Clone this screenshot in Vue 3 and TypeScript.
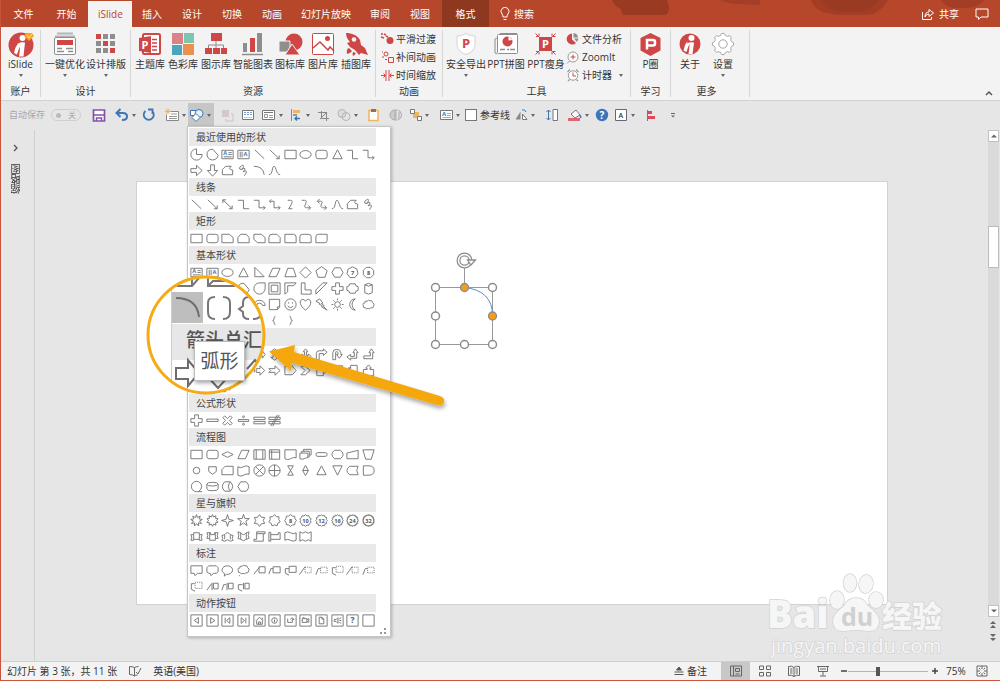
<script setup lang="ts">
import { ref } from 'vue'

interface Tool { label: string; art: string; drop?: boolean; wide?: boolean }
interface QuickItem { label: string; art: string; gap: string; drop?: boolean }
interface Section { title: string; shapes: string[]; covered?: boolean }

const RED = '#cf4647'
const GREY = '#8e8e8e'

const tabs = [
  { label: '文件', kind: 'roomy' }, { label: '开始', kind: 'roomy' }, { label: 'iSlide', kind: 'current' },
  { label: '插入', kind: '' }, { label: '设计', kind: '' }, { label: '切换', kind: '' }, { label: '动画', kind: '' },
  { label: '幻灯片放映', kind: 'long' }, { label: '审阅', kind: '' }, { label: '视图', kind: '' }, { label: '格式', kind: 'context' },
]

const infoBadge = `<circle cx="14" cy="15" r="12.5" fill="${RED}"/><circle cx="15.5" cy="8" r="3" fill="#fff"/><path d="M11 13.5q3-2 7-1l-1.5 14h-4.500q1-6 1-10-1.200 2-3 8l-3-1.500q1-6 4-9.500z" fill="#fff"/>`

const account: Tool[] = [
  { label: 'iSlide', drop: true, art: `${infoBadge}<path d="M19 3h6l2 3-5 5-5-5z" fill="#f6a51c"/><path d="M20 5l2 3 3-4" stroke="#ffe38a" fill="none"/>` },
]
const design: Tool[] = [
  { label: '一键优化', drop: true, wide: true, art: `<path d="M6 3.500h16M4 6.500h20" stroke="#b5b5b5" stroke-width="2"/><rect x="3.500" y="7.500" width="21" height="17" rx="1.500" fill="#fff" stroke="${GREY}"/><rect x="6" y="10" width="16" height="5" fill="${RED}"/><path d="M6 18.500h5M6 21.500h7M15 18.500h7M17 21.500h5" stroke="${GREY}" stroke-width="1.500"/>` },
  { label: '设计排版', drop: true, wide: true, art: [0, 1, 2].map(r => [0, 1, 2].map(c => `<rect x="${4 + c * 7}" y="${4 + r * 7}" width="5" height="5" fill="${r === c ? RED : GREY}"/>`).join('')).join('') },
]
const resources: Tool[] = [
  { label: '主题库', art: `<rect x="7" y="4" width="17" height="20" rx="1.500" fill="#fff" stroke="${RED}" stroke-width="2"/><path d="M16 9.500h5M16 13h5M16 16.500h5M16 20h5" stroke="${RED}" stroke-width="1.500"/><path d="M3 8l12-2v17L3 21z" fill="${RED}"/><text x="5.500" y="18.500" font-size="11" font-weight="700" fill="#fff">P</text>` },
  { label: '色彩库', art: `<path d="M3 3h11v11H3z" fill="#dc8089"/><path d="M15 3h10v10H15z" fill="#7cc6b1"/><path d="M3 15h10v10H3z" fill="#4ba6bd"/><path d="M14 14h11v11H14z" fill="#ea9050"/>` },
  { label: '图示库', art: `<path d="M14 11v4M6.500 20v-5h15v5M14 15v5" fill="none" stroke="${GREY}"/><path d="M9 3h11v8H9zM3 18h7v6H3zM11 18h7v6h-7zM19 18h6v6h-6z" fill="${RED}"/>` },
  { label: '智能图表', wide: true, art: `<path d="M4 13h4v9H4zM18 3h5v19h-5z" fill="${GREY}"/><path d="M11 8h5v14h-5z" fill="${RED}"/><path d="M3 24.500h21" stroke="${GREY}" stroke-width="1.500"/>` },
  { label: '图标库', art: `<circle cx="18" cy="12" r="8.500" fill="${RED}"/><path d="M3 11h11v11H3z" fill="${GREY}" stroke="#f3f3f3"/><path d="M16 14l8 11H9z" fill="${RED}" stroke="#f3f3f3"/>` },
  { label: '图片库', art: `<rect x="3.500" y="3.500" width="21" height="21" rx="1" fill="#fff" stroke="${RED}"/><path d="M4 18l7-6 8 8 2-3 4 4" fill="none" stroke="${RED}" stroke-width="1.500"/><circle cx="18.500" cy="8.500" r="2.500" fill="${RED}"/>` },
  { label: '插图库', art: `<path d="M4 3c6 0 11 2 14 7l1 5 4 3 3 7-7-2-2 2-4-5-5-3-3-4 3-1C5 9 4 6 4 3z" fill="${RED}"/><circle cx="12" cy="9.500" r="2.300" fill="#f3f3f3"/><path d="M7 18q-3 1-2 6 4-1 5-3M11 22q-1 2 0 4 2-1 3-3" fill="${RED}"/>` },
]
const motion: Tool[] = [
  { label: '平滑过渡', art: `<circle cx="10" cy="8.500" r="3.500" fill="${RED}"/><path d="M1 2h2M4 2l2 1M1 5l3 1M6 4l2 1" stroke="${RED}" stroke-width="1.500"/>` },
  { label: '补间动画', art: `<path d="M8.500 7.500h5v5h-5z" fill="none" stroke="${RED}"/><circle cx="6" cy="4" r="2" fill="none" stroke="${RED}"/><path d="M2 2h1M2 7h2M5 9.500h2" stroke="${RED}"/>` },
  { label: '时间缩放', art: `<path d="M6 2v11M9 2v11" stroke="${RED}"/><path d="M1 7.500h4M3.500 5.500l2 2-2 2M14 7.500h-4M11.500 5.500l-2 2 2 2" fill="none" stroke="${RED}"/>` },
]
const toolsBig: Tool[] = [
  { label: '安全导出', drop: true, wide: true, art: `<path d="M14 3.500q4 2.500 9 2.500v9q-1 7-9 9.500Q6 22 5 15V6q5 0 9-2.500z" fill="#fff" stroke="#d5d5d5"/><text x="10" y="18" font-size="13" font-weight="700" fill="${RED}">P</text>` },
  { label: 'PPT拼图', wide: true, art: `<path d="M5 8l-2 1v14l2 1M8 5V3.500h17V6" fill="none" stroke="${GREY}"/><rect x="5.500" y="4.500" width="20" height="19" rx="1" fill="#fff" stroke="${GREY}"/><circle cx="15.500" cy="11.500" r="5" fill="${RED}"/><path d="M16.500 10.500V6l4 4z" fill="#fff"/><path d="M8 19.500h5M15 19.500h2M18 19.500h5" stroke="${GREY}" stroke-width="1.500"/>` },
  { label: 'PPT瘦身', wide: true, art: `<path d="M7 7h13v14H7z" fill="${RED}"/><text x="10" y="18" font-size="11" font-weight="700" fill="#fff">P</text><path d="M3.500 3.500l4 4M4 6.500h3V3.500M23.500 3.500l-4 4M20 3.500v3h3.500M3.500 24.500l4-4M4 21.500h3v3M23.500 24.500l-4-4M23.500 21.500H20v3" fill="none" stroke="${RED}"/>` },
]
const toolsSmall: Tool[] = [
  { label: '文件分析', art: `<path d="M6 1.500v6l4 3.500A5.500 5.500 0 1 1 6 1.500z" fill="${RED}"/><path d="M7.500 1A5 5 0 0 1 12 5.500H7.500zM8 6.500h4.500L11 10z" fill="${GREY}"/>` },
  { label: 'ZoomIt', art: `<circle cx="7" cy="7" r="5" fill="#fff" stroke="#999"/><path d="M3.500 11L1 13.500" stroke="#999"/><path d="M4.500 7h5M7 4.500v5" stroke="${RED}"/>` },
  { label: '计时器', drop: true, art: `<circle cx="7" cy="7.500" r="4.700" fill="#fff" stroke="#999"/><path d="M1.500 4l2.500-2.500M12.500 4L10 1.500M3.500 11.500L2 13M10.500 11.500L12 13" stroke="#999" stroke-width="1.300"/><path d="M7 4.500V8h3" fill="none" stroke="${RED}"/>` },
]
const learn: Tool[] = [
  { label: 'P圈', art: `<path d="M13.500 3l10 5v12.500l-10 5.500-10-5.500V8z" fill="${RED}"/><path d="M10 19.500V10h6q2 0 2 2v1.500q0 2-2 2h-6" fill="none" stroke="#fff" stroke-width="2.500"/>` },
]
const gear = Array.from({ length: 48 }, (_, i) => {
  const a = (i / 48) * Math.PI * 2
  const r = 9.7 + Math.max(-1, Math.min(1, Math.cos(a * 8) * 1.6))
  return `${(14 + r * Math.cos(a)).toFixed(1)},${(14 + r * Math.sin(a)).toFixed(1)}`
}).join(' ')
const more: Tool[] = [
  { label: '关于', art: infoBadge.replace('cy="15" r="12.5"', 'cy="14" r="10.5"').replace('14h-4.500', '11.500h-4') },
  { label: '设置', drop: true, art: `<polygon points="${gear}" fill="#fff" stroke="#a5a5a5"/><circle cx="14" cy="14" r="4.200" fill="#fff" stroke="#a5a5a5"/>` },
]

const quickLeft: QuickItem[] = [
  { label: '保存', gap: '', art: `<path d="M2.500 3h11v11h-11z" fill="#fff" stroke="#8451a8" stroke-width="1.700"/><path d="M3 8h10M5.500 14v-3h5v3" fill="none" stroke="#8451a8" stroke-width="1.500"/>` },
  { label: '撤消', gap: 'large', drop: true, art: `<path d="M3 6h6q4 0 4 3.500Q13 13 8 13M6.500 2L2.500 6l4 4" fill="none" stroke="#3c76b6" stroke-width="2"/>` },
  { label: '恢复', gap: 'small', art: `<path d="M4.500 4a5 5 0 1 0 6.500 0M7 2.500h4.500V7" fill="none" stroke="#3c76b6" stroke-width="1.800"/>` },
  { label: '新建幻灯片', gap: 'large', drop: true, art: `<path d="M4.500 4.500h10v9h-12v-6" fill="#fff" stroke="#888"/><path d="M7 7h6M5 9.500h8M5 11.500h8" stroke="#999"/><path d="M4 1.500v6M1 4.500h6M2 2.500l4 4M6 2.500l-4 4" stroke="#efb45d"/>` },
]
const quickRight: QuickItem[] = [
  { label: '组合', gap: 'medium', art: `<path d="M3 3h7v7H3z" fill="#d4c8cf"/><path d="M12 7h2v7H7v-2" fill="none" stroke="#c7c7c7"/>` },
  { label: '文本框', gap: 'medium', art: `<path d="M2.500 3.500h11v9h-11z" fill="#fff" stroke="#777"/><path d="M4 5.500h8M4 7.500h8" stroke="#76a0cf" stroke-dasharray="2 1"/><path d="M4 10.500h8" stroke="#ccc"/>` },
  { label: '版式', gap: 'medium', drop: true, art: `<path d="M1.500 3.500h12v9h-12z" fill="#fff" stroke="#777"/><path d="M3 5.500h9" stroke="#777"/><path d="M3.500 7.500h3v3h-3zM8 8.500h4M8 10.500h4" fill="none" stroke="#999"/>` },
  { label: '对齐', gap: 'small', drop: true, art: `<path d="M3.500 2v12" stroke="#888"/><path d="M5 3h7v3H5z" fill="#efb45d"/><path d="M5 7h4v2H5z" fill="#999"/><path d="M12 11.500H7M9 9.500l-2 2 2 2" fill="none" stroke="#3c76b6" stroke-width="1.500"/>` },
  { label: '裁剪', gap: 'small', art: `<path d="M6.500 4v7.500H14M3 5.500h8.500V14M5 12l7-7" fill="none" stroke="#888"/>` },
  { label: '合并形状', gap: 'medium', drop: true, art: `<circle cx="6" cy="6.500" r="4" fill="#ddd" stroke="#b4b4b4"/><circle cx="10" cy="9.500" r="4" fill="none" stroke="#b4b4b4"/>` },
  { label: '粘贴', gap: 'medium', art: `<path d="M4 3.500h9v10H4z" fill="#fff" stroke="#efb45d" stroke-width="1.500"/><path d="M6 2h5v3H6z" fill="#777"/>` },
  { label: '翻转', gap: 'large', art: `<path d="M8 2v12M7 3A5 5 0 0 0 7 13z" fill="#ccc" stroke="#aaa"/><path d="M9.500 3q4 1 4 5t-4 5M11 5v7" fill="none" stroke="#aaa"/>` },
  { label: '排列', gap: 'small', drop: true, art: `<path d="M6 5h6v6H6z" fill="#efb45d"/><path d="M3.500 2.500h4v4h-4zM10.500 9.500h4v4h-4z" fill="#fff" stroke="#777"/>` },
  { label: '占位符', gap: 'large', drop: true, art: `<path d="M2.500 3.500h12v9h-12z" fill="#fff" stroke="#777"/><text x="4" y="9" font-size="6" font-weight="700" fill="#3c76b6">A</text><path d="M9 6.500h4M9 8.500h4M4.500 10.500H13" stroke="#aaa"/>` },
]
const quickEnd: QuickItem[] = [
  { label: '旋转', gap: 'small', drop: true, art: `<path d="M2.500 12.500l5-8v8z" fill="#888"/><path d="M9.500 12.500V7l4.500 5.500z" fill="#fff" stroke="#777"/><path d="M9 3q3-1 4 2" fill="none" stroke="#3c76b6"/>` },
  { label: '大小', gap: 'large', art: `<path d="M4.500 3v10M2.500 5l2-2 2 2M2.500 11l2 2 2-2" fill="none" stroke="#3c76b6"/><path d="M9 2.500h4.500v11H9z" fill="#fff" stroke="#777"/>` },
  { label: '形状填充', gap: 'large', drop: true, art: `<path d="M4 7l5-4 4 5-5 3z" fill="#fff" stroke="#777"/><path d="M13 8l1 3" stroke="#3c76b6" stroke-width="1.500"/><path d="M1 11h12v3H1z" fill="#df6673"/>` },
  { label: '帮助', gap: 'small', art: `<circle cx="8" cy="8" r="6.200" fill="#3c76b6"/><text x="5.500" y="12" font-size="10" font-weight="700" fill="#fff">?</text>` },
  { label: '字体', gap: 'small', drop: true, art: `<path d="M2.500 2.500h11v11h-11z" fill="#fff" stroke="#667"/><text x="5.500" y="11" font-size="7" font-weight="600" fill="#333">A</text>` },
  { label: '左对齐', gap: 'medium', art: `<path d="M5.500 3v11" stroke="#777"/><path d="M6 4h4v3H6zM6 9h7v3H6z" fill="#e0485a"/>` },
  { label: '自定义工具栏', gap: 'large', art: `<path d="M6 6.500h4" stroke="#666"/><path d="M6 8.500h4l-2 2z" fill="#666"/>` },
]

function star(points: number, outer: number, inner: number): string {
  let d = ''
  for (let i = 0; i < points * 2; i++) {
    const r = i % 2 ? inner : outer
    const a = (i / (points * 2)) * Math.PI * 2 - Math.PI / 2
    d += `${i ? 'L' : 'M'}${(8 + r * Math.cos(a)).toFixed(1)} ${(8 + r * Math.sin(a)).toFixed(1)}`
  }
  return d + 'Z'
}
function polygon(sides: number, r: number, turn = 0): string {
  let d = ''
  for (let i = 0; i < sides; i++) {
    const a = ((i + turn) / sides) * Math.PI * 2 - Math.PI / 2
    d += `${i ? 'L' : 'M'}${(8 + r * Math.cos(a)).toFixed(1)} ${(8 + r * Math.sin(a)).toFixed(1)}`
  }
  return d + 'Z'
}
const box = 'M2 2h12v12h-12z'

const glyphs: Record<string, string> = {
  pie: 'M8 2A6 6 0 1 0 14 8H8z',
  chord: 'M4 3.500A6 6 0 1 0 14 9L8.500 2.500Q6 2 4 3.500z',
  textH: 'M2 3.500h12v9h-12zM9 6h3.500M9 8h3.500M4 10.500h8.500',
  textV: 'M2 3.500h12v9h-12zM4.500 5v6M6.500 5v6',
  line: 'M3 3L13 12.500',
  arrow: 'M3 3L13 12.500M13 9v3.500H9.500',
  arrow2: 'M3 3L13 12.500M13 9v3.500H9.500M3 6.500V3h3.500',
  rect: 'M2 3.500h12v9h-12z',
  ellipse: 'M2 8a6 4.200 0 1 0 12 0a6 4.200 0 1 0-12 0',
  round: 'M4.500 3.500h7q2.500 0 2.500 2.500v4q0 2.500-2.500 2.500h-7Q2 12.500 2 10V6q0-2.500 2.500-2.500z',
  tri: 'M8 3L13 12.500H3z',
  elbow: 'M2 3.500h6v9h6',
  elbowA: 'M2 3.500h5.500v8H14M12 9.500l2 2-2 2',
  elbowA2: 'M3 4.500h4.500v7H14M12 9.500l2 2-2 2M4.500 2.500l-2 2 2 2',
  right: 'M2 6h6V2.500L14 8l-6 5.500V10H2z',
  left: 'M14 6H8V2.500L2 8l6 5.500V10h6z',
  down: 'M6 2v6H2.500L8 14l5.500-6H10V2z',
  up: 'M6 14V8H2.500L8 2l5.500 6H10v6z',
  free: 'M2.500 12.500V7l3.500-3.500h6q-4 3.500 1.500 4v5z',
  scribble: 'M4 4.500Q8 1 8 3.500T5.500 7Q9 5 9.500 6T7.500 9.500Q10.500 7.500 11 9T9 13.500M4 4.500Q3 7 5.500 7',
  arc: 'M2 3.500q10 0 11 9',
  curve: 'M2 12.500C6.500 12.500 5 3.500 7.500 3.500s2 9 6.500 9',
  curve1: 'M5 3.500h3q3 0 1 4t-3 5h4',
  curveA: 'M4 3.500h3q3 0 1 4t1 4h4M11 9l2.500 2.500L11 14',
  curveA2: 'M4 4.500h3q3 0 1 3t1 4h4M11 9l2.500 2.500L11 14M6 2L3.500 4.500 6 7',
  snip1: 'M2 3.500h8l4 3.500v5.500H2z',
  snip2: 'M5 3.500h6L14 7v5.500H2V7z',
  snipD: 'M2 3.500h8l4 3.500v5.500H6L2 9z',
  snipR: 'M5.500 3.500h5L14 7v5.500H2V7q0-3.500 3.500-3.500z',
  round1: 'M2 3.500h9q3 0 3 3v6H2z',
  round2: 'M5 3.500h6q3 0 3 2.500v6.500H2V6q0-2.500 3-2.500z',
  roundD: 'M5 3.500h9V10q0 2.500-2.500 2.500H2V6q0-2.500 3-2.500z',
  rtri: 'M3 2.500v10h10z', para: 'M6 3.500h8l-4 9H2z', trap: 'M5 3.500h6l3 9H2z',
  diamond: 'M8 2l6 6-6 6-6-6z', flatDiamond: 'M8 5l6 3-6 3-6-3z',
  pent: polygon(5, 6.3), hex: 'M5 3h6l3 5-3 5H5L2 8z', seven: polygon(7, 6), eight: polygon(8, 6, 0.5),
  circle: 'M2.500 8a5.500 5.500 0 1 0 11 0a5.500 5.500 0 1 0-11 0',
  smallCircle: 'M4.500 8a3.500 3.500 0 1 0 7 0a3.500 3.500 0 1 0-7 0',
  tear: 'M8 2h6V8A6 6 0 1 1 8 2z',
  frame: 'M2 2h12v12H2zM4.500 4.500h7v7h-7z',
  half: 'M2 14V2h12l-2.500 3H5v6.500z', ell: 'M3.500 2v12H14V9.500H7.500V2z', diag: 'M2 14V9.500L9.500 2H14z',
  plus: 'M6 2h4v4h4v4h-4v4H6v-4H2V6h4z',
  plaque: 'M5 3h6q0 3 3 3v4q-3 0-3 3H5q0-3-3-3V6q3 0 3-3z',
  can: 'M4 4q4-3 8 0v8.500q-4 3-8 0zM4 4q4 3 8 0',
  cube: 'M2.500 5.500l3-3h8v8l-3 3h-8zM2.500 5.500h8v8M10.500 5.500l3-3',
  bevel: 'M2.500 2.500h11v11h-11zM5 5h6v6H5zM2.500 2.500L5 5M13.500 2.500L11 5M2.500 13.500L5 11M13.500 13.500L11 11',
  donut: 'M2.500 8a5.500 5.500 0 1 0 11 0a5.500 5.500 0 1 0-11 0M5.500 8a2.500 2.500 0 1 0 5 0a2.500 2.500 0 1 0-5 0',
  no: 'M2.500 8a5.500 5.500 0 1 0 11 0a5.500 5.500 0 1 0-11 0M4 4l8 8',
  blockArc: 'M2 9a6 5.500 0 0 1 12 0h-3a3 2.500 0 0 0-6 0z',
  fold: 'M2.500 2.500h11v8.500l-2.500 2.500H2.500zM13.500 10.500H11v3',
  smile: 'M2 8a6 6 0 1 0 12 0a6 6 0 1 0-12 0M5 9.500q3 3.500 6 0M6 5.500v1.500M10 5.500v1.500',
  heart: 'M8 14C0 8 2 2.500 5 2.500q2 0 3 2 1-2 3-2C14 2.500 16 8 8 14z',
  bolt: 'M2 4.500l4-2.500 3.500 4.500-1.500.5 3 2.500-1 .5 4 4-6-3.500 1-1-3.500-2L6.500 7z', sun: 'M5 8a3 3 0 1 0 6 0a3 3 0 1 0-6 0M8 1.500v2M8 12.500v2M1.500 8h2M12.500 8h2M3.500 3.500l1.500 1.500M11 11l1.500 1.500M12.500 3.500L11 5M5 11l-1.500 1.500',
  moon: 'M11 2a6 6 0 0 0 0 12A7 7 0 0 1 11 2z',
  cloud: 'M4.500 11.500Q1.500 11.500 2.500 9 1 6.500 4 6.500 3.500 3.500 6.500 4.500 8 2.500 9.500 4 12 3 12.500 6 15 7.500 13.500 9.500 13 12.500 10.500 11.500 9 13.500 7.500 12 5.500 13.500 4.500 11.500z',
  brackets: 'M5 3q-2 0-2 2v6q0 2 2 2M11 3q2 0 2 2v6q0 2-2 2',
  braces: 'M6 3Q4 3 4 5v2L3 8l1 1v2q0 2 2 2M10 3q2 0 2 2v2l1 1-1 1v2q0 2-2 2',
  bl: 'M9 3Q7 3 7 5v6q0 2 2 2', br: 'M7 3q2 0 2 2v6q0 2-2 2',
  cl: 'M9 3.500Q7.500 3.500 7.500 6v1L6 8l1.500 1v1q0 2.500 1.500 2.500', cr: 'M7 3.500q1.500 0 1.500 2.500v1L10 8l-1.500 1v1q0 2.500-1.500 2.500',
  lr: 'M2 8l3-4v2.500h6V4l3 4-3 4V9.500H5V12z', ud: 'M8 2l4 3H9.500v6H12l-4 3-4-3h2.500V5H4z',
  quad: 'M8 2l2.500 3H9v2h2V5.500L14 8l-3 2.500V9H9v2h1.500L8 14l-2.500-3H7V9H5v1.500L2 8l3-2.500V7h2V5H5.500z',
  triArrow: 'M8 2l2.500 3H9v4h2V7.500l3 2.500-3 3v-1.500H5V13l-3-3 3-2.500V9h2V5H5.500z',
  bent: 'M2.500 13.500V7q0-3 3-3H10V2l4 3.500L10 9V7H5.500v6.500z',
  uturn: 'M3 13.500V6q0-3.500 4-3.500T11.500 6v2H13l-3 4-3-4h1.500V6q0-1-1.500-1T6 6v7.500z',
  leftUp: 'M10 6H8.500L11 2l3 4h-1.500v6H6v2l-4-3.500L6 8v2h4z', bentUp: 'M10 6H8.500L11 2l3 4h-1.500v6.500H3v-3h7z',
  striped: 'M2.500 6v4M4.500 6h4V3l5 5-5 5v-3h-4z', notched: 'M2 6h6.500V3l5.500 5-5.500 5v-3H2l2-2z',
  home: 'M2 3.500h8l4 4.500-4 4.500H2z', chev: 'M3 3.500h5l5 4.500-5 4.500H3L7.500 8z',
  callR: 'M3 2.500h7V6h1.500V4.500L14 8l-2.500 3V9.500H10v4H3z', callD: 'M2.500 3h11v6H9.500v1.500h1.500L8 14l-3-3.500h1.500V9h-4z',
  callL: 'M13 2.500H6V6H4.500V4.500L2 8l2.500 3V9.500H6v4h7z', callU: 'M2.500 13.500h11V7h-4V5.500H11L8 2 5 5.500h1.500V7h-4z',
  minus: 'M2 6.500h12v2.500h-12z', times: 'M3 5l2-2 3 3 3-3 2 2-3 3 3 3-2 2-3-3-3 3-2-2 3-3z',
  divide: 'M2.500 7h11v2h-11zM7 4a1 1 0 1 0 2 0a1 1 0 1 0-2 0M7 12a1 1 0 1 0 2 0a1 1 0 1 0-2 0',
  equal: 'M2 4.500h12V7H2zM2 9h12v2.500H2z', notEqual: 'M2 4.500h12V7H2zM2 9h12v2.500H2zM11 2L4 14M13 2L6 14',
  predefined: 'M2 3h12v10H2zM4.500 3v10M11.500 3v10', internal: 'M2.500 3h11v10h-11zM5 3v10M2.500 5.500h11',
  doc: 'M2 3h12v8.500q-3-1-6 1t-6 0z', multi: 'M2 6.500h8.500v5q-3 0-4 1t-4.500 0zM4 6.500v-2h8v6h-1.500M6 4.500v-2h8v6h-2',
  pill: 'M4 6h8q2 0 2 2t-2 2H4q-2 0-2-2t2-2z', prep: 'M5 3.500h6q3 2 3 4.500t-3 4.500H5Q2 10.500 2 8t3-4.500z',
  manual: 'M2 6.500l12-3v9H2z', manualOp: 'M2 3h12l-3 10H5z', offpage: 'M4 4h8v5l-4 3-4-3z',
  card: 'M5.500 3.500H14v9H2V7z', tape: 'M2 4q3 2 6 0t6 0v8q-3-1-6 1t-6 0z',
  sumX: 'M2 8a6 6 0 1 0 12 0a6 6 0 1 0-12 0M4 4l8 8M12 4l-8 8',
  orPlus: 'M2 8a6 6 0 1 0 12 0a6 6 0 1 0-12 0M8 2v12M2 8h12',
  collate: 'M5 3h6l-6 10h6z', sort: 'M8 2.500L11 8l-3 5.500L5 8zM5 8h6', merge: 'M3 3h10L8 13z',
  stored: 'M5 3.500h9q-3 4.500 0 9H5Q-1 8 5 3.500z', delay: 'M2.500 3h6Q14 3 14 8t-5.500 5h-6z',
  seq: 'M14 13.500H8A5.500 5.500 0 1 1 13.500 8q0 3-3 5', drum: 'M2 5.500q0-2 6-2t6 2v5q0 2-6 2t-6-2zM2 5.500q0 2 6 2t6-2',
  direct: 'M5 3h6q5 5 0 10H5Q0 8 5 3zM11 3Q7 8 11 13', display: 'M5 3h6q5 5 0 10H5L2 8z',
  burst1: star(9, 6.3, 3.3), burst2: star(10, 6.3, 4), star4: star(4, 6.3, 2), star5: star(5, 6.5, 2.6), star6: star(6, 6.3, 4), star7: star(7, 6.3, 4.6),
  star8: star(8, 6.3, 5.2), star10: star(10, 6.3, 5.2), star12: star(12, 6.3, 5.2), star16: star(16, 6.3, 5.2), star24: star(24, 6.3, 5.2), star32: star(30, 6.3, 5.2),
  ribbonU: 'M2 6h3V4h6v2h3l-1 3 1 3h-3v-1H5v1H2l1-3zM5 6v5M11 6v5', ribbonD: 'M2 4h4v2h4V4h4l-1 3 1 3h-3v2H5v-2H2l1-3zM5 4v6M11 4v6',
  waveU: 'M2 7l3-1q3-4 6 0l3 1-1 3 1 2-3 1q-3-3-6 0l-3-1 1-2zM5 6v5M11 6v5', waveD: 'M2 3l3 1q3 4 6 0l3-1-1 4 1 3-3 1q-3 3-6 0l-3-1 1-3zM5 4v7M11 4v7',
  scrollV: 'M5 3h9v2h-2v8H2v-2h3zM5 5h7', scrollH: 'M4 6V3.500H2V13h2v-2h10V4h-2v2H4zM4 6v5', flag: 'M2 4q3-2 6 0t6 0v8q-3 2-6 0t-6 0z', flag2: 'M2 3q3 3 6 0 3 3 6 0v10q-3-3-6 0-3-3-6 0z',
  talk: 'M2 3h12v8H9l-2.500 2.500-1-2.500H2z', talkR: 'M4 3h8l2 2v4.500L12 11H9l-2.500 2.500-1-2.500H4L2 9.500V5z',
  talkO: 'M5 11.500C0 9 2 3 8 3s8 7 1 9H7l-2.500 2z', talkC: 'M4.500 10.500Q1.500 10.500 2.500 8 1 5.500 4 5.500 3.500 2.500 6.500 3.500 8 1.500 9.500 3 12 2 12.500 5 15 6.500 13.500 8.500 13 11.500 10.500 10.500 9 12.500 7.500 11 5.500 12.500 4.500 10.500zM3 13.500h1',
  lineA: 'M7.500 4h6.500v6.500H7.500zM2 12l5.500-7', lineB: 'M6.500 4H14v6.500H6.500zM2 12l2-6h2.500', lineC: 'M6.500 3.500H14v6.500H6.500zM6.500 6H2.500v5l4 2',
  call1: 'M1.500 12.500L7.500 4', call2: 'M2 12.500L4.500 6H7', call3: 'M6 5H2.500v6l4 2',
  accent1: 'M2 12l5-7M7.500 4v8M9 4.500h5v6H9z', accent2: 'M2 12l2-6h2.500M7.500 4v8M9 4.500h5v6H9z', accent3: 'M7 6H2.500v5l4 2M8 4v7M9.500 4.500H14v6H9.500z',
  btnBack: box + 'M10 5v6L5.500 8z', btnNext: box + 'M6 5v6l4.500-3z', btnFirst: box + 'M10.500 5v6L7 8zM5.500 5v6', btnLast: box + 'M5.500 5v6L9 8zM10.500 5v6',
  btnHome: box + 'M4 8.500l4-4 4 4M5 8.500V12h6V8.500M7 12V9.500h2V12M11 7V5', btnInfo: box + 'M5 8a3 3 0 1 0 6 0a3 3 0 1 0-6 0M8 7v3M8 5.500v.500',
  btnReturn: box + 'M5 6v4h5V7h2L9.500 5 8 7', btnMovie: box + 'M4.500 6h5v4h-5zM9.500 7l2-1v4l-2-1M5 5h2', btnDoc: box + 'M5.500 4.500h3l2 2v5h-5zM8.500 4.500v2h2',
  btnSound: box + 'M4.500 7h2l2-2v6l-2-2h-2zM10 6l2-1M10 8h2M10 10l2 1', btnHelp: box, btnBlank: box,
}
const marks: Record<string, string> = { seven: '7', eight: '8', star8: '8', star10: '10', star12: '12', star16: '16', star24: '24', star32: '32', btnHelp: '?' }
const dashed: Record<string, string> = { call1: 'M7.500 4.500H14v6H7.500z', call2: 'M7 4.500h7v6H7z', call3: 'M6.500 3.500H14v6.500H6.500z' }

const w = (s: string): string[] => s.split(' ')
const sections: Section[] = [
  { title: '最近使用的形状', shapes: w('pie chord textH textV line arrow rect ellipse round tri elbow elbowA right down free scribble arc curve') },
  { title: '线条', shapes: w('line arrow arrow2 elbow elbowA elbowA2 curve1 curveA curveA2 curve free scribble') },
  { title: '矩形', shapes: w('rect round snip1 snip2 snipD snipR round1 round2 roundD') },
  { title: '基本形状', shapes: w('textH textV ellipse tri rtri para trap diamond pent hex seven eight circle circle pie chord tear frame half ell diag plus plaque can cube bevel donut no blockArc fold smile heart bolt sun moon cloud arc brackets braces bl br cl cr') },
  { title: '箭头总汇', covered: true, shapes: w('right left up down lr ud quad triArrow bent uturn leftUp bentUp bent uturn left right striped notched home chev callR callD callL callU lr quad uturn') },
  { title: '公式形状', shapes: w('plus minus times divide equal notEqual') },
  { title: '流程图', shapes: w('rect round flatDiamond para predefined internal doc multi pill prep manual manualOp smallCircle offpage card tape sumX orPlus collate sort tri merge stored delay seq drum direct display') },
  { title: '星与旗帜', shapes: w('burst1 burst2 star4 star5 star6 star7 star8 star10 star12 star16 star24 star32 ribbonU ribbonD waveU waveD scrollV scrollH flag flag2') },
  { title: '标注', shapes: w('talk talkR talkO talkC lineA lineB lineC call1 call2 call3 call1 call2 call3 accent1 accent2 accent3') },
  { title: '动作按钮', shapes: w('btnBack btnNext btnFirst btnLast btnHome btnInfo btnReturn btnMovie btnDoc btnSound btnHelp btnBlank') },
]

const views = [
  { label: '普通视图', on: true, art: '<path d="M2.500 3h11v10h-11zM5.500 3v10M7.500 5.500h4v3h-4zM7.500 11h4" />' },
  { label: '幻灯片浏览', on: false, art: '<path d="M2.500 3h4v3.500h-4zM9.500 3h4v3.500h-4zM2.500 9.500h4V13h-4zM9.500 9.500h4V13h-4z"/>' },
  { label: '阅读视图', on: false, art: '<path d="M8 4.500q-2-2-5.500-1v9q3-1 5.500 1 2-2 5.500-1v-9q-3.500-1-5.500 1zM8 4.500v9M4 6h2.500M4 8h2.500M4 10h2.500M9.500 6H12M9.500 8H12M9.500 10H12"/>' },
  { label: '幻灯片放映', on: false, art: '<path d="M2 3.500h12M3.500 3.500v5h9v-5M8 8.500v4M5 13h6M5 6h6"/>' },
]
const guides = ref(false)
const autoSave = ref(false)
const zoom = ref(37)
</script>

<template>
  <div class="app">
    <header class="titlebar">
      <svg class="swirl" viewBox="0 0 400 27" width="400" height="27" aria-hidden="true">
        <path d="M12 0q3 7 8 8l3 7h42q4-1 4-8l-2-7z" fill="#9b3a22" />
        <path d="M120 0q8 4 18 4l22 1 0-5z" fill="#a43e26" />
        <path d="M211 0q2 8 12 12l14 3h30q10-1 16-8l5-7z" fill="#a33d25" />
        <path d="M222 0q4 10 20 12h20q13-4 16-12z" fill="#9b3a22" />
        <path d="M341 0q3 7 16 8h10q12-1 17-8z" fill="#a33d25" />
      </svg>
      <nav class="tabs">
        <button v-for="t in tabs" :key="t.label" class="tab" :class="t.kind">{{ t.label }}</button>
        <button class="search">
          <svg viewBox="0 0 12 14" width="12" height="14"><path d="M4 10q0-2-1-3a4 4 0 1 1 6 0q-1 1-1 3zM4.500 12.500h3" fill="none" stroke="#fff" /></svg>
          搜索
        </button>
      </nav>
      <div class="title-actions">
        <button class="share">
          <svg viewBox="0 0 14 14" width="14" height="14"><path d="M1.500 5v7.500h9V10M4 10q0-5 4-5V2.500L12.500 6 8 9.500V7Q5 7 4 10z" fill="none" stroke="#fff" /></svg>
          共享
        </button>
        <button class="comment" aria-label="批注">
          <svg viewBox="0 0 14 14" width="14" height="14"><path d="M1 2h12v8H6l-2.500 2.500V10H1z" fill="none" stroke="#fff" /></svg>
        </button>
      </div>
    </header>

    <section class="ribbon">
      <div v-for="g in [{ n: '账户', k: 'account', i: account }, { n: '设计', k: 'design', i: design }, { n: '资源', k: 'resources', i: resources }]" :key="g.n" class="group" :class="g.k">
        <div class="tools">
          <button v-for="t in g.i" :key="t.label" class="tool" :class="{ wide: t.wide }">
            <svg viewBox="0 0 28 28" width="28" height="28" v-html="t.art" />
            <span>{{ t.label }}</span><i v-if="t.drop" class="caret" />
          </button>
        </div>
        <div class="group-name">{{ g.n }}</div>
      </div>
      <div class="group motion">
        <div class="stack">
          <button v-for="t in motion" :key="t.label" class="mini"><svg viewBox="0 0 15 15" width="15" height="15" v-html="t.art" />{{ t.label }}</button>
        </div>
        <div class="group-name">动画</div>
      </div>
      <div class="group kit">
        <div class="tools">
          <button v-for="t in toolsBig" :key="t.label" class="tool wide">
            <svg viewBox="0 0 28 28" width="28" height="28" v-html="t.art" />
            <span>{{ t.label }}</span><i v-if="t.drop" class="caret" />
          </button>
          <div class="stack">
            <button v-for="t in toolsSmall" :key="t.label" class="mini"><svg viewBox="0 0 15 15" width="15" height="15" v-html="t.art" />{{ t.label }}<i v-if="t.drop" class="caret" /></button>
          </div>
        </div>
        <div class="group-name">工具</div>
      </div>
      <div v-for="g in [{ n: '学习', k: 'learn', i: learn }, { n: '更多', k: 'more', i: more }]" :key="g.n" class="group" :class="g.k">
        <div class="tools">
          <button v-for="t in g.i" :key="t.label" class="tool">
            <svg viewBox="0 0 28 28" width="28" height="28" v-html="t.art" />
            <span>{{ t.label }}</span><i v-if="t.drop" class="caret" />
          </button>
        </div>
        <div class="group-name">{{ g.n }}</div>
      </div>
      <button class="collapse" aria-label="折叠功能区"><svg viewBox="0 0 10 8" width="10" height="8"><path d="M2 6l3-3 3 3" fill="none" stroke="#555" stroke-width="1.500" /></svg></button>
    </section>

    <div class="quick">
      <label class="autosave">自动保存<input v-model="autoSave" type="checkbox" disabled /><span class="switch"><b /><em>关</em></span></label>
      <button v-for="q in quickLeft" :key="q.label" class="qbtn" :class="[q.gap, { drop: q.drop }]" :aria-label="q.label">
        <svg viewBox="0 0 16 16" width="16" height="16" v-html="q.art" /><i v-if="q.drop" class="caret" />
      </button>
      <div class="shape-anchor">
        <button class="qbtn drop pressed" aria-label="形状" aria-expanded="true">
          <svg viewBox="0 0 16 16" width="16" height="16"><path d="M1.500 3.500h6v5h-6z" fill="#fff" stroke="#3c76b6" /><circle cx="10" cy="6.500" r="4" fill="#e8f0fa" stroke="#3c76b6" /><path d="M7 6.500l4 4-4 4-4-4z" fill="#fff" stroke="#3c76b6" /></svg><i class="caret" />
        </button>
        <div class="menu">
          <section v-for="s in sections" :key="s.title" class="menu-section">
            <h3 :aria-label="s.title">{{ s.covered ? '' : s.title }}</h3>
            <div class="shapes">
              <button v-for="(n, i) in s.shapes" :key="i" class="shape" :aria-label="n">
                <svg viewBox="0 0 16 16" width="15" height="15">
                  <path :d="glyphs[n]" class="outline" />
                  <path v-if="dashed[n]" :d="dashed[n]" class="outline dashed" />
                  <text v-if="marks[n]" x="8" y="10.500" class="mark" :class="{ big: n === 'btnHelp' }">{{ marks[n] }}</text>
                  <text v-if="n === 'textH'" x="3.500" y="9" class="letter">A</text>
                  <text v-if="n === 'textV'" x="8" y="10" class="letter">A</text>
                </svg>
              </button>
            </div>
          </section>
          <svg class="grip" viewBox="0 0 8 6" width="8" height="6"><path d="M5 0h2v2H5zM1 4h2v2H1zM5 4h2v2H5z" fill="#999" /></svg>

          <svg class="lens" viewBox="0 0 304 128" width="304" height="128">
            <defs>
              <clipPath id="lensClip"><circle cx="64" cy="64" r="57" /></clipPath>
              <filter id="soft" x="-20%" y="-20%" width="140%" height="150%"><feDropShadow dx="1" dy="3" stdDeviation="2" flood-opacity=".35" /></filter>
            </defs>
            <g clip-path="url(#lensClip)">
              <path d="M0 0h128v128H0z" fill="#fff" />
              <path d="M29.500 0v128" stroke="#ccc" />
              <path d="M30 53h98v36H30z" fill="#e7e7e7" />
              <path d="M32 15h18l7-8M50 15V6M66 4v11h26v-5M66 15l5-5h18" fill="none" stroke="#777" stroke-width="2" />
              <path d="M30 21h31v31H30z" fill="#bebebe" />
              <path d="M34 27q21 0 23 19" fill="none" stroke="#6d6d6d" stroke-width="2" />
              <path d="M73 26q-7 0-7 6v9q0 7 7 7M81 26q7 0 7 6v9q0 7-7 7M107 26q-6 0-6 6v3l-4 3 4 3v2q0 5 6 5M111 26q7 0 7 6v4l3 2-3 3v3q0 4-7 4" fill="none" stroke="#777" stroke-width="2" />
              <path d="M34 97h12v-8l11 13-11 13v-7H34zM66 106l10 11 10-11h-6V90h-8v16zM105 98l8-9 9 9" fill="#fff" stroke="#6d6d6d" stroke-width="2" />
              <text x="44" y="76" class="lens-title">箭头总汇</text>
            </g>
            <circle cx="64" cy="64" r="58" fill="none" stroke="#f5ab13" stroke-width="3" />
            <g filter="url(#soft)">
              <path d="M127 80.500L153 74l-1 7 146 44q5 2 4 6t-7 3L150 92l-1 8z" fill="#f5a80f" />
            </g>
          </svg>
          <div class="tip">弧形</div>
        </div>
      </div>
      <button v-for="q in quickRight" :key="q.label" class="qbtn" :class="[q.gap, { drop: q.drop }]" :aria-label="q.label">
        <svg viewBox="0 0 16 16" width="16" height="16" v-html="q.art" /><i v-if="q.drop" class="caret" />
      </button>
      <label class="guides"><input v-model="guides" type="checkbox" />参考线</label>
      <button v-for="q in quickEnd" :key="q.label" class="qbtn" :class="[q.gap, { drop: q.drop }]" :aria-label="q.label">
        <svg viewBox="0 0 16 16" width="16" height="16" v-html="q.art" /><i v-if="q.drop" class="caret" />
      </button>
    </div>

    <main class="workspace">
      <aside class="thumbs">
        <button aria-label="展开缩略图"><svg viewBox="0 0 8 8" width="8" height="8"><path d="M2 1l3 3-3 3" fill="none" stroke="#555" stroke-width="1.300" /></svg></button>
        <span>缩略图</span>
      </aside>
      <div class="canvas">
        <div class="slide">
          <svg class="selection" viewBox="0 0 80 110" width="80" height="110">
            <path d="M36.500 18v20M7.500 38.500h57v57h-57z" fill="none" stroke="#999" />
            <path d="M36.500 38.500q28 3 28 28" fill="none" stroke="#5b8fcb" />
            <circle cx="36.500" cy="11.500" r="6" fill="none" stroke="#8c8c8c" stroke-width="4" />
            <circle cx="36.500" cy="11.500" r="6" fill="none" stroke="#fff" stroke-width="1.500" />
            <path d="M39.500 11h8L43 16z" fill="#fff" stroke="#8c8c8c" stroke-width="1.300" />
            <circle v-for="p in [[7.5, 38.5], [64.5, 38.5], [7.5, 67], [7.5, 95.5], [36.5, 95.5], [64.5, 95.5]]" :key="p.join()" :cx="p[0]" :cy="p[1]" r="4" fill="#fff" stroke="#8c8c8c" stroke-width="1.500" />
            <circle cx="36.500" cy="38.500" r="4" fill="#f59c1a" stroke="#8c8c8c" stroke-width="1.300" />
            <circle cx="64.500" cy="67" r="4" fill="#f59c1a" stroke="#8c8c8c" stroke-width="1.300" />
          </svg>
        </div>
        <svg class="watermark" viewBox="0 0 184 94" width="184" height="94">
          <g class="wm">
            <ellipse cx="71" cy="34" rx="7" ry="9" /><ellipse cx="84" cy="17" rx="6.500" ry="9" /><ellipse cx="100" cy="18" rx="7" ry="9" transform="rotate(8 100 18)" /><ellipse cx="110" cy="34" rx="7" ry="8" />
            <path d="M90 32q8 0 12 8 11 8 11 15 0 11-12 10-11-2-22 0-12 1-12-10 0-7 11-15 4-8 12-8z" />
            <text x="1" y="62" class="wm-big">Bai</text>
            <text x="116" y="61" class="wm-cn">经验</text>
            <text x="5" y="87" class="wm-url">jingyan.baidu.com</text>
          </g>
          <text x="75" y="60" class="wm-du">du</text>
        </svg>
      </div>
      <div class="scroll">
        <button class="sbtn" aria-label="向上"><svg viewBox="0 0 10 10" width="10" height="10"><path d="M2 6.500h6L5 3.500z" fill="#666" /></svg></button>
        <div class="track"><div class="thumb" /></div>
        <button class="sbtn" aria-label="向下"><svg viewBox="0 0 10 10" width="10" height="10"><path d="M2 3.500h6L5 6.500z" fill="#666" /></svg></button>
        <button class="pbtn" aria-label="上一张"><svg viewBox="0 0 10 10" width="10" height="10"><path d="M2 5h6L5 2zM2 9h6L5 6z" fill="#666" /></svg></button>
        <button class="pbtn" aria-label="下一张"><svg viewBox="0 0 10 10" width="10" height="10"><path d="M2 1h6L5 4zM2 5h6L5 8z" fill="#666" /></svg></button>
      </div>
    </main>

    <footer class="status">
      <span>幻灯片 第 3 张，共 11 张</span>
      <button class="proof" aria-label="拼写检查"><svg viewBox="0 0 14 12" width="14" height="12"><path d="M6.500 2.500q-2-1-5-1v8q3 0 5 1.500V2.500q2-1 4-1M6.500 11q1-1 3-1M8 7l2 2 3-6" fill="none" stroke="#666" /></svg></button>
      <button>英语(美国)</button>
      <div class="status-right">
        <button class="notes"><svg viewBox="0 0 10 12" width="10" height="12"><path d="M5 2l2.500 3h-5zM.500 7h9M.500 9.500h9" fill="#555" stroke="#555" /></svg>备注</button>
        <button v-for="v in views" :key="v.label" class="view" :class="{ on: v.on }" :aria-label="v.label"><svg viewBox="0 0 16 16" width="16" height="16" fill="none" stroke="#666" v-html="v.art" /></button>
        <button class="step" aria-label="缩小"><svg viewBox="0 0 8 8" width="8" height="8"><path d="M1 4h6" stroke="#444" stroke-width="1.500" /></svg></button>
        <input v-model="zoom" class="zoom" type="range" min="0" max="100" aria-label="缩放" />
        <button class="step" aria-label="放大"><svg viewBox="0 0 8 8" width="8" height="8"><path d="M1 4h6M4 1v6" stroke="#444" stroke-width="1.500" /></svg></button>
        <span class="percent">75%</span>
        <button class="fit" aria-label="适应窗口"><svg viewBox="0 0 14 14" width="14" height="14"><path d="M2 2h10v10H2zM7 2v3M7 12V9M2 7h3M12 7H9M4 4l1.500 1.500M10 4L8.500 5.500M4 10l1.500-1.500M10 10L8.500 8.500" fill="none" stroke="#666" /></svg></button>
      </div>
    </footer>
  </div>
</template>

<style>
body { background: #e6e6e6; }
</style>

<style scoped>
.app { display: flex; flex-direction: column; height: 100vh; box-sizing: border-box; overflow: hidden; border-left: 1px solid #c8543c; border-bottom: 1px solid #c8543c; background: #e6e6e6; color: #333; font: 10px/14px "Open Sans", "Noto Sans CJK SC", sans-serif; }
.app * { box-sizing: border-box; }
button { padding: 0; border: 0; background: none; color: inherit; font: inherit; white-space: nowrap; }
svg { display: block; flex: none; }
.caret { width: 0; height: 0; border: 2px solid transparent; border-top: 3px solid #666; border-bottom: 0; }

.titlebar { position: relative; display: flex; justify-content: space-between; flex: none; height: 27px; background: #b7472a; color: #fff; }
.swirl { position: absolute; right: 0; top: 0; }
.tabs { position: relative; display: flex; padding-left: 1px; }
.tab { padding: 0 10px; }
.tab.long { padding: 0 9px; }
.tab.roomy { width: 43px; }
.tab.current { width: 44px; margin: 1px 0 0; background: #f3f3f3; color: #b7472a; }
.tab.context { width: 47px; margin-left: 2px; background: #8e3820; }
.search { display: flex; align-items: center; gap: 3px; padding: 0 10px; }
.title-actions { position: relative; display: flex; align-items: center; gap: 16px; padding-right: 11px; }
.share { display: flex; align-items: center; gap: 4px; }

.ribbon { display: flex; flex: none; height: 74px; padding: 3px 0; background: #f3f3f3; border-bottom: 1px solid #d2d2d2; color: #333; }
.group { display: flex; flex-direction: column; justify-content: space-between; flex: none; border-right: 1px solid #d6d6d6; }
.account { width: 40px; }
.design { width: 90px; }
.resources { width: 245px; }
.motion { width: 67px; }
.kit { width: 188px; }
.learn { width: 40px; }
.more { width: 79px; padding-right: 7px; }
.tools { display: flex; justify-content: center; }
.kit .tools { justify-content: flex-start; padding-left: 3px; }
.tool { display: flex; flex-direction: column; align-items: center; width: 33px; line-height: 12px; }
.tool.wide { width: 41px; }
.kit .tool.wide { width: 40px; }
.tool .caret { margin-top: 4px; }
.group-name { text-align: center; line-height: 12px; }
.stack { display: flex; flex-direction: column; }
.motion .stack { padding-left: 4px; }
.mini { display: flex; align-items: center; gap: 1px; height: 18px; }
.mini .caret { margin-left: 6px; }
.collapse { margin: auto 6px 0 auto; }

.quick { position: relative; z-index: 2; display: flex; align-items: center; flex: none; height: 28px; padding-left: 8px; }
.autosave { display: flex; align-items: center; width: 82px; gap: 6px; color: #a8a8a8; font-size: 9px; }
.autosave input { position: absolute; opacity: 0; }
.switch { display: flex; align-items: center; justify-content: space-between; width: 30px; height: 12px; padding: 0 4px; border: 1px solid #cfcfcf; border-radius: 6px; }
.switch b { width: 5px; height: 5px; border-radius: 50%; background: #bbb; }
.switch em { font-style: normal; font-size: 8px; line-height: 10px; }
.qbtn { display: flex; align-items: center; flex: none; width: 16px; height: 24px; gap: 2px; }
.qbtn.drop { width: 24px; }
.small { margin-left: 3px; }
.medium { margin-left: 5px; }
.large { margin-left: 7px; }
.shape-anchor { position: relative; }
.qbtn.pressed { width: 26px; padding-left: 1px; gap: 2px; background: #c6c6c6; }
.guides { display: flex; align-items: center; gap: 3px; margin-left: 3px; }
.guides input { appearance: none; width: 12px; height: 12px; margin: 0; border: 1px solid #777; background: #fff; }

.menu { position: absolute; left: -1px; top: 23px; width: 204px; padding: 1px 14px 8px 1px; background: #fff; border: 1px solid #c6c6c6; box-shadow: 1px 1px 3px rgba(0, 0, 0, .25); }
h3 { height: 18px; margin: 0; padding-left: 7px; background: #e9e9e9; color: #444; font-size: 10px; font-weight: 400; line-height: 18px; }
.shapes { display: grid; grid-template-columns: repeat(12, minmax(0, 1fr)); }
.shape { display: grid; place-items: end center; height: 16px; }
.outline { fill: none; stroke: #757575; stroke-width: 1; }
.dashed { stroke-dasharray: 1 1; }
.mark { fill: #555; font-size: 6px; font-weight: 700; text-anchor: middle; }
.mark.big { font-size: 9px; }
.letter { fill: #3c76b6; font-size: 6px; font-weight: 700; }
.grip { position: absolute; right: 3px; bottom: 2px; }
.lens { position: absolute; left: -46px; top: 144px; overflow: visible; }
.lens-title { fill: #555; font-size: 19px; font-weight: 500; }
.tip { position: absolute; left: 6px; top: 214px; width: 51px; padding: 8px 0; border: 1px solid #bbb; background: #fff; box-shadow: 1px 2px 4px rgba(0, 0, 0, .35); color: #555; font-size: 19px; line-height: 22px; text-align: center; }

.workspace { display: flex; flex: 1; min-height: 0; border-bottom: 1px solid #cfcfcf; }
.thumbs { display: flex; flex-direction: column; align-items: center; gap: 12px; flex: none; width: 34px; margin-top: 1px; padding: 14px 3px 0 0; border-right: 1px solid #d0d0d0; }
.thumbs span { writing-mode: vertical-rl; transform: rotate(180deg); line-height: 12px; }
.canvas { position: relative; display: flex; align-items: center; justify-content: center; flex: 1; padding: 0 0 4px 1px; }
.slide { position: relative; width: 79%; aspect-ratio: 750 / 422; background: #fff; border: 1px solid #d2d2d2; }
.selection { position: absolute; left: 291px; top: 67px; }
.watermark { position: absolute; right: 38px; bottom: 1px; }
.wm { fill: #f6f6f6; stroke: #d3d3d3; stroke-width: 1.5; paint-order: stroke; }
.wm-big { font-size: 38px; font-weight: 800; }
.wm-cn { font-size: 30px; font-weight: 900; }
.wm-url { font-size: 20px; }
.wm-du { fill: #d0d0d0; font-size: 25px; font-weight: 700; }
.scroll { display: flex; flex-direction: column; flex: none; width: 12px; margin-top: 1px; padding-bottom: 16px; }
.sbtn { display: grid; place-items: center; width: 11px; height: 12px; border: 1px solid #c2c2c2; background: #fff; }
.track { flex: 1; width: 11px; padding-top: 84px; background: #dadada; }
.thumb { height: 42px; border: 1px solid #bdbdbd; background: #fff; }
.pbtn { height: 14px; }

.status { display: flex; align-items: center; flex: none; height: 18px; padding-left: 6px; background: #f3f3f3; }
.proof { margin: 0 11px; }
.status-right { display: flex; align-items: center; align-self: stretch; margin-left: auto; padding-right: 11px; }
.notes { display: flex; align-items: center; gap: 3px; margin-right: 14px; }
.view { display: grid; place-items: center; align-self: stretch; width: 29px; }
.view.on { background: #c8c8c8; }
.step { margin-left: 3px; }
.zoom { appearance: none; width: 80px; height: 14px; margin: 0; background: linear-gradient(#b5b5b5, #b5b5b5) center / 100% 1px no-repeat; }
.zoom::-webkit-slider-thumb { appearance: none; width: 4px; height: 9px; background: #555; }
.percent { width: 24px; margin-left: 7px; }
.fit { margin-left: 5px; }
</style>
